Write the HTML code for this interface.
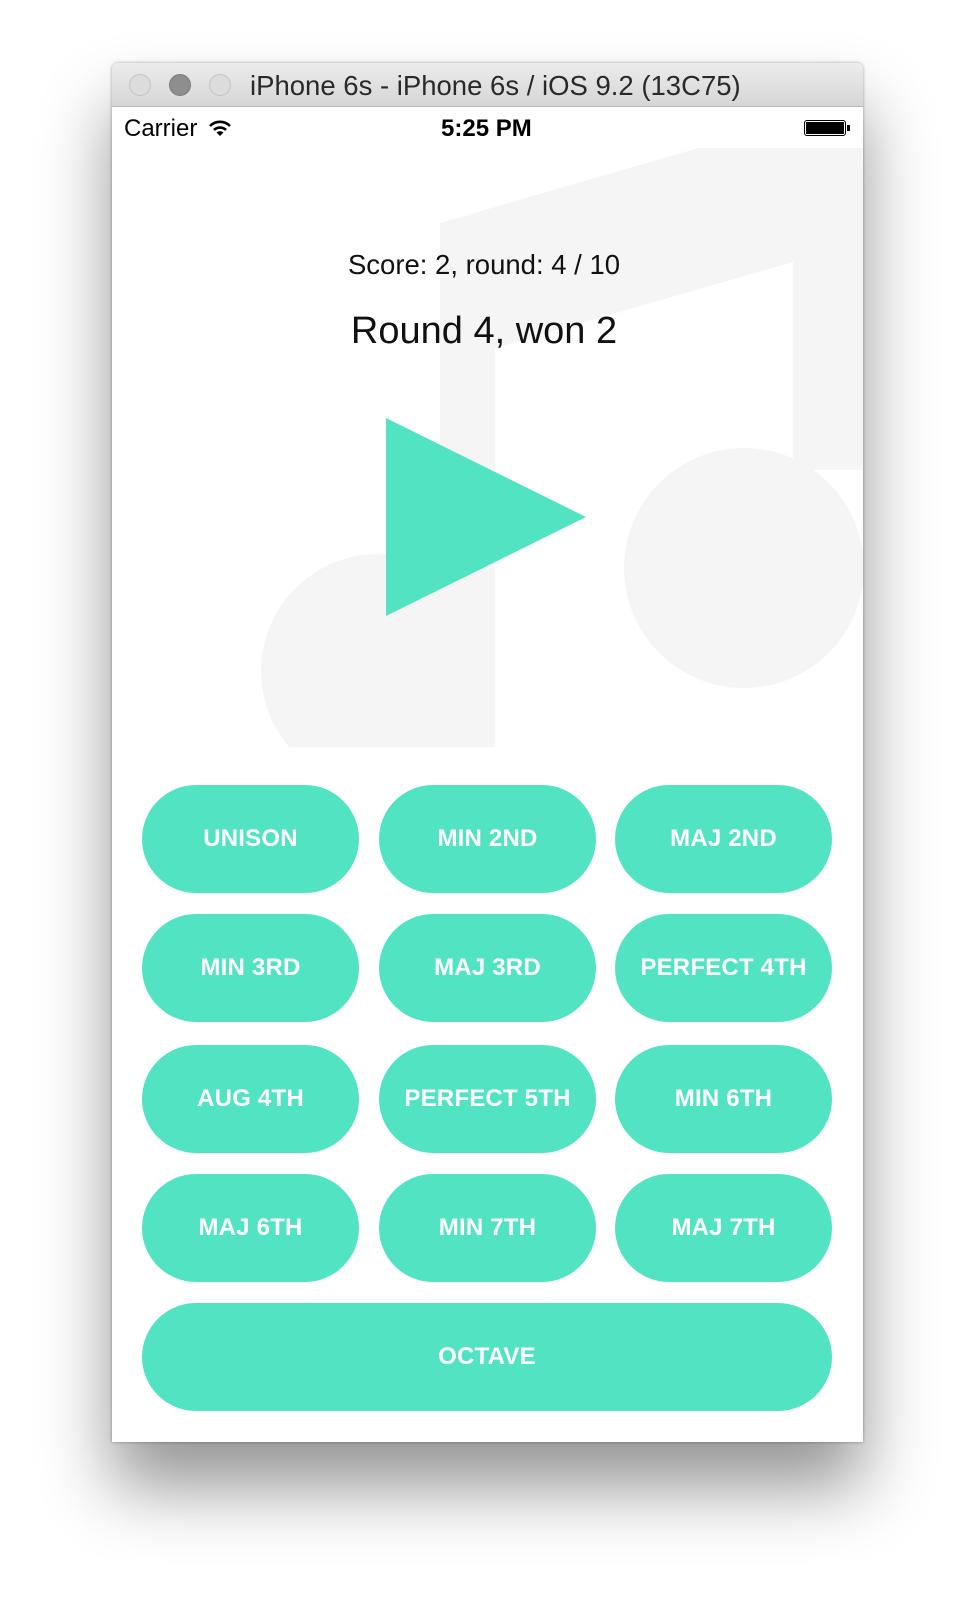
<!DOCTYPE html>
<html><head><meta charset="utf-8"><style>
html,body{margin:0;padding:0;background:#fff;width:974px;height:1602px;overflow:hidden;font-family:"Liberation Sans",sans-serif;}
.win{position:absolute;left:112px;top:63px;width:751px;height:1379px;background:#fff;box-shadow:0 45px 70px rgba(0,0,0,0.42),0 0 3px rgba(0,0,0,0.35);border-radius:6px 6px 0 0;overflow:hidden;}
.tb{position:absolute;left:0;top:0;width:751px;height:43px;background:linear-gradient(#ececec,#d6d6d6);border-bottom:1px solid #b8b8b8;}
.dot{position:absolute;top:11px;width:22px;height:22px;border-radius:50%;background:#dcdcdc;border:1px solid #c4c4c4;box-sizing:border-box;}
.title{position:absolute;left:138px;top:7px;font-size:27.5px;color:#2a2a2a;white-space:nowrap;}
.t{position:absolute;white-space:nowrap;color:#000;}
.b{position:absolute;height:108px;width:217px;border-radius:54px;background:#52e3c2;color:#fff;font-weight:bold;font-size:24px;display:flex;align-items:center;justify-content:center;letter-spacing:0.2px;}
</style></head><body>
<div class="win">
<svg width="751" height="1379" style="position:absolute;left:0;top:0" viewBox="112 63 751 1379">
<g fill="#f5f5f5">
<polygon points="440,223 698,148 863,148 863,470 793,470 793,262 495,348 495,747 440,747"/>
<circle cx="744" cy="568" r="120"/>
<clipPath id="c"><rect x="112" y="106" width="751" height="641"/></clipPath>
<circle cx="378" cy="671" r="117" clip-path="url(#c)"/>
</g>
<polygon points="386,418 586,517 386,616" fill="#52e3c2"/>
</svg>
<div class="tb">
<div class="dot" style="left:17px"></div>
<div class="dot" style="left:57px;background:#8e8e8e;border-color:#7a7a7a"></div>
<div class="dot" style="left:97px"></div>
<div class="title">iPhone 6s - iPhone 6s / iOS 9.2 (13C75)</div>
</div>
<div class="t" style="left:12px;top:52px;font-size:24px">Carrier
<svg width="24" height="18" viewBox="0 0 24 18" style="vertical-align:-1px;margin-left:4px"><path d="M2 7 A14 14 0 0 1 22 7" stroke="#000" stroke-width="2.6" fill="none"/><path d="M6 11 A8.5 8.5 0 0 1 18 11" stroke="#000" stroke-width="2.6" fill="none"/><path d="M12 17 L8.5 13.5 A5 5 0 0 1 15.5 13.5 Z" fill="#000"/></svg></div>
<div class="t" style="left:329px;top:52px;font-size:24px;font-weight:bold">5:25 PM</div>
<div style="position:absolute;left:692px;top:57px;width:42px;height:16px;border:1.5px solid #000;border-radius:3px;box-sizing:border-box;padding:1px"><div style="width:100%;height:100%;background:#000"></div></div>
<div class="t" style="left:735px;top:62px;width:3px;height:6px;background:#000"></div>
<div class="t" style="left:222px;top:186px;width:300px;text-align:center;font-size:27.5px;color:#111">Score: 2, round: 4 / 10</div>
<div class="t" style="left:222px;top:247px;width:300px;text-align:center;font-size:38px;color:#111">Round 4, won 2</div>

<div class="b" style="left:30px;top:722px">UNISON</div>
<div class="b" style="left:267px;top:722px">MIN 2ND</div>
<div class="b" style="left:503px;top:722px">MAJ 2ND</div>
<div class="b" style="left:30px;top:851px">MIN 3RD</div>
<div class="b" style="left:267px;top:851px">MAJ 3RD</div>
<div class="b" style="left:503px;top:851px">PERFECT 4TH</div>
<div class="b" style="left:30px;top:982px">AUG 4TH</div>
<div class="b" style="left:267px;top:982px">PERFECT 5TH</div>
<div class="b" style="left:503px;top:982px">MIN 6TH</div>
<div class="b" style="left:30px;top:1111px">MAJ 6TH</div>
<div class="b" style="left:267px;top:1111px">MIN 7TH</div>
<div class="b" style="left:503px;top:1111px">MAJ 7TH</div>
<div class="b" style="left:30px;top:1240px;width:690px">OCTAVE</div>
</div>
</body></html>
